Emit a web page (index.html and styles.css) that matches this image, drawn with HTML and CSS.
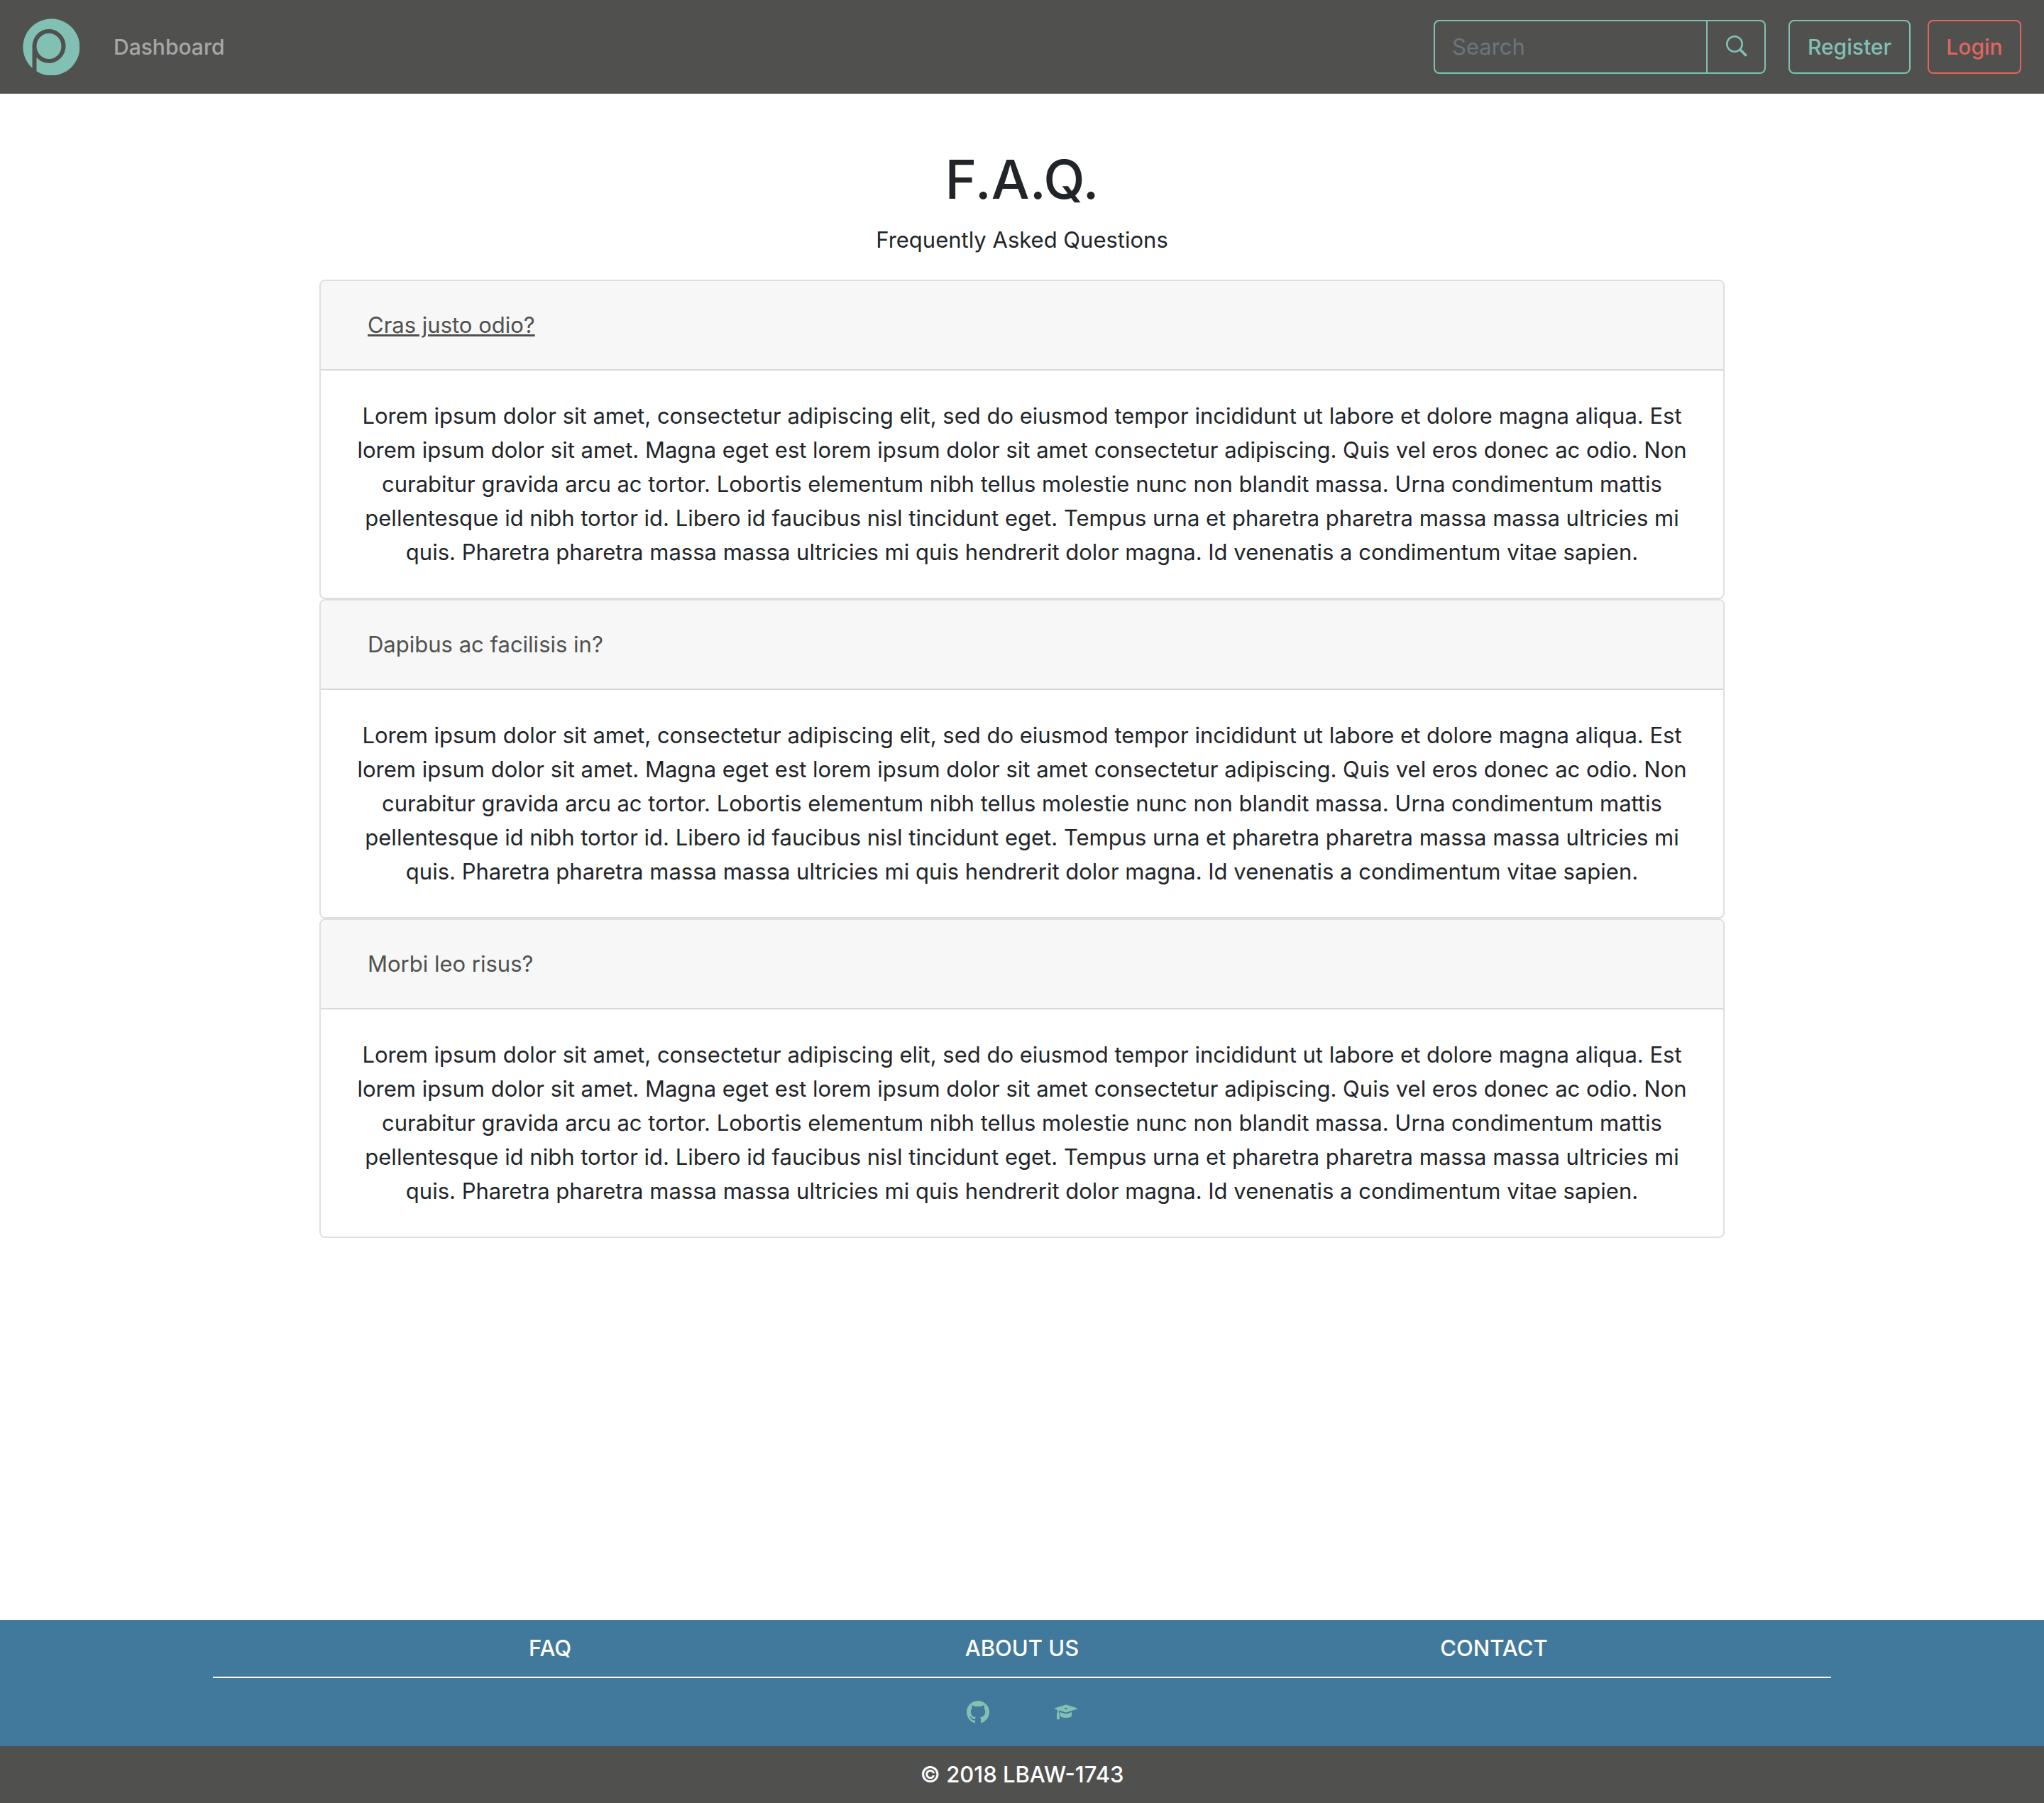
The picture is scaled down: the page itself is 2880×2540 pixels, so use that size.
FILE: index.html
```html
<!DOCTYPE html>
<html lang="en">
<head>
<meta charset="utf-8">
<meta name="viewport" content="width=device-width, initial-scale=1">
<title>F.A.Q.</title>
<link rel="stylesheet" href="styles.css">
</head>
<body>
<header class="navbar">
  <nav class="nav-main" aria-label="Main">
    <a class="brand" href="#" aria-label="Home">
      <svg class="logo" viewBox="0 0 80 80" aria-hidden="true">
        <path class="logo-disc" d="M13.500 70.000 V38.500 A23.500 24 0 1 1 19.500 55.000 V74.500 A40 40 0 1 0 13.500 70 Z"/>
        <ellipse class="logo-disc" cx="37" cy="39" rx="17.500" ry="18"/>
      </svg>
    </a>
    <a class="nav-link" href="#">Dashboard</a>
  </nav>
  <div class="nav-actions">
    <form class="search" role="search">
      <input class="search-input" type="search" placeholder="Search" aria-label="Search">
      <button class="search-button" type="submit" aria-label="Search">
        <svg class="search-icon" viewBox="0 0 32 32" aria-hidden="true"><circle cx="14" cy="12" r="10.700" stroke-width="2.600"/><path d="M22 20L29.500 27.500" stroke-width="3.600"/></svg>
      </button>
    </form>
    <button class="button button-teal" type="button">Register</button>
    <button class="button button-red" type="button">Login</button>
  </div>
</header>

<main class="content">
  <h1 class="title">F.A.Q.</h1>
  <p class="subtitle">Frequently Asked Questions</p>
  <section class="card">
    <h2 class="card-header"><button class="question question-active" type="button">Cras justo odio?</button></h2>
    <p class="card-body">Lorem ipsum dolor sit amet, consectetur adipiscing elit, sed do eiusmod tempor incididunt ut labore et dolore magna aliqua. Est lorem ipsum dolor sit amet. Magna eget est lorem ipsum dolor sit amet consectetur adipiscing. Quis vel eros donec ac odio. Non curabitur gravida arcu ac tortor. Lobortis elementum nibh tellus molestie nunc non blandit massa. Urna condimentum mattis pellentesque id nibh tortor id. Libero id faucibus nisl tincidunt eget. Tempus urna et pharetra pharetra massa massa ultricies mi quis. Pharetra pharetra massa massa ultricies mi quis hendrerit dolor magna. Id venenatis a condimentum vitae sapien.</p>
  </section>
  <section class="card">
    <h2 class="card-header"><button class="question" type="button">Dapibus ac facilisis in?</button></h2>
    <p class="card-body">Lorem ipsum dolor sit amet, consectetur adipiscing elit, sed do eiusmod tempor incididunt ut labore et dolore magna aliqua. Est lorem ipsum dolor sit amet. Magna eget est lorem ipsum dolor sit amet consectetur adipiscing. Quis vel eros donec ac odio. Non curabitur gravida arcu ac tortor. Lobortis elementum nibh tellus molestie nunc non blandit massa. Urna condimentum mattis pellentesque id nibh tortor id. Libero id faucibus nisl tincidunt eget. Tempus urna et pharetra pharetra massa massa ultricies mi quis. Pharetra pharetra massa massa ultricies mi quis hendrerit dolor magna. Id venenatis a condimentum vitae sapien.</p>
  </section>
  <section class="card">
    <h2 class="card-header"><button class="question" type="button">Morbi leo risus?</button></h2>
    <p class="card-body">Lorem ipsum dolor sit amet, consectetur adipiscing elit, sed do eiusmod tempor incididunt ut labore et dolore magna aliqua. Est lorem ipsum dolor sit amet. Magna eget est lorem ipsum dolor sit amet consectetur adipiscing. Quis vel eros donec ac odio. Non curabitur gravida arcu ac tortor. Lobortis elementum nibh tellus molestie nunc non blandit massa. Urna condimentum mattis pellentesque id nibh tortor id. Libero id faucibus nisl tincidunt eget. Tempus urna et pharetra pharetra massa massa ultricies mi quis. Pharetra pharetra massa massa ultricies mi quis hendrerit dolor magna. Id venenatis a condimentum vitae sapien.</p>
  </section>
</main>

<footer class="footer">
  <div class="footer-top">
    <nav class="footer-links" aria-label="Footer">
      <a href="#">FAQ</a>
      <a href="#">ABOUT US</a>
      <a href="#">CONTACT</a>
    </nav>
    <hr class="rule">
    <div class="social">
      <a href="#" aria-label="GitHub"><svg class="social-icon" viewBox="0 0 16 16" aria-hidden="true"><path d="M8 0C3.580 0 0 3.580 0 8c0 3.540 2.290 6.530 5.470 7.590.4.070.550-.170.550-.380 0-.190-.010-.820-.010-1.490-2.010.370-2.530-.490-2.690-.940-.090-.230-.480-.940-.820-1.130-.280-.150-.680-.520-.010-.530.630-.010 1.080.580 1.230.820.720 1.210 1.870.870 2.330.660.070-.520.280-.870.510-1.070-1.780-.2-3.640-.890-3.640-3.950 0-.870.310-1.590.820-2.150-.080-.2-.360-1.020.080-2.120 0 0 .670-.210 2.200.820.640-.180 1.320-.270 2-.270s1.360.090 2 .270c1.530-1.040 2.200-.820 2.200-.820.440 1.100.160 1.920.080 2.120.510.560.820 1.270.820 2.150 0 3.070-1.870 3.750-3.650 3.950.290.250.540.730.540 1.480 0 1.070-.010 1.930-.010 2.200 0 .210.150.460.550.380A8.010 8.010 0 0 0 16 8c0-4.420-3.580-8-8-8z"/></svg></a>
      <a href="#" aria-label="University"><svg class="social-icon" viewBox="0 0 16 16" aria-hidden="true"><path fill-rule="evenodd" d="M7.830 9.190L4 8v2.500C4 11.500 5.800 12 8 12s4-.5 4-1.500V8L8.170 9.190a.73.73 0 0 1-.34 0zM8.110 2.800a.34.34 0 0 0-.2 0L.270 5.180c-.35.11-.35.59 0 .7L2 6.400v1.770c-.3.17-.5.5-.5.86v4.080h2V9.030c0-.38-.2-.69-.5-.86V6.720l4.890 1.530c.06.02.14.02.2 0l7.640-2.380c.35-.11.35-.59 0-.7L8.110 2.800zM8.020 6c-.55 0-1-.22-1-.5s.45-.5 1-.5 1 .22 1 .5-.45.5-1 .5z"/></svg></a>
    </div>
  </div>
  <p class="copyright">© 2018 LBAW-1743</p>
</footer>
</body>
</html>
```
FILE: styles.css
```css
:root {
  --dark: #50514f;
  --teal: #83c0b4;
  --red: #e1665e;
  --blue: #40799c;
  --ink: #212529;
}

*, *::before, *::after { box-sizing: border-box; }

body {
  margin: 0;
  min-height: 100vh;
  display: flex;
  flex-direction: column;
  background: #fff;
  color: var(--ink);
  font: 400 31px/48px Inter, "Liberation Sans", sans-serif;
}

h1, h2, p { margin: 0; font-weight: 400; }
a { color: inherit; text-decoration: none; }
button, input { font: inherit; }
svg { display: block; }

.navbar {
  display: flex;
  align-items: center;
  justify-content: space-between;
  padding: 26px 32px;
  background: var(--dark);
}
.nav-main { display: flex; align-items: center; gap: 48px; }
.logo { width: 80px; height: 80px; }
.logo-disc { fill: var(--teal); }
.nav-link { color: #a7a8a7; font-size: 30px; font-weight: 500; }

.nav-actions { display: flex; gap: 24px; }
.search {
  display: flex;
  width: 468px;
  height: 76px;
  margin-right: 8px;
  border: 2px solid var(--teal);
  border-radius: 8px;
}
.search-input {
  flex: 1;
  min-width: 0;
  padding: 0 24px;
  border: 0;
  background: transparent;
  color: #fff;
  outline: none;
  appearance: none;
}
.search-input::placeholder { color: #6c757d; opacity: 1; }
.search-button {
  display: grid;
  place-items: center;
  width: 82px;
  padding: 0;
  border: 0;
  border-left: 2px solid var(--teal);
  background: transparent;
}
.search-icon {
  width: 32px;
  height: 32px;
  fill: none;
  stroke: var(--teal);
  stroke-linecap: round;
}
.button {
  height: 76px;
  padding: 0;
  border: 2px solid currentColor;
  border-radius: 8px;
  background: transparent;
  font-size: 30px;
  font-weight: 500;
}
.button-teal { width: 172px; color: var(--teal); }
.button-red { width: 132px; color: var(--red); }

.content {
  flex: 1;
  width: 100%;
  max-width: 1980px;
  margin: 0 auto;
  padding: 72px 0 48px;
}
.title {
  margin-bottom: 14px;
  font-size: 76px;
  font-weight: 500;
  line-height: 96px;
  text-align: center;
}
.subtitle { margin-bottom: 32px; text-align: center; }

.card {
  border: 2px solid #dfdfdf;
  border-radius: 8px;
  overflow: hidden;
}
.card-header {
  padding: 38px 66px;
  border-bottom: 2px solid #d8d8d8;
  background: #f7f7f7;
  font-size: 31px;
  line-height: 48px;
}
.question {
  display: block;
  padding: 0;
  border: 0;
  background: transparent;
  color: var(--dark);
}
.question-active {
  text-decoration: underline;
}
.card-body { padding: 40px; text-align: center; }

.footer { color: #fff; font-weight: 500; text-align: center; }
.footer-top { padding: 16px 32px 24px; background: var(--blue); }
.footer-links {
  display: grid;
  grid-template-columns: repeat(3, 1fr);
  max-width: 1995px;
  margin: 0 auto;
}
.rule {
  max-width: 2280px;
  margin: 16px auto 24px;
  border: 0;
  border-top: 2px solid #fff;
}
.social {
  display: flex;
  justify-content: center;
  align-items: center;
  gap: 92px;
  height: 48px;
}
.social-icon { width: 32px; height: 32px; fill: var(--teal); }
.copyright { padding: 16px; background: var(--dark); font-weight: 500; }
```
